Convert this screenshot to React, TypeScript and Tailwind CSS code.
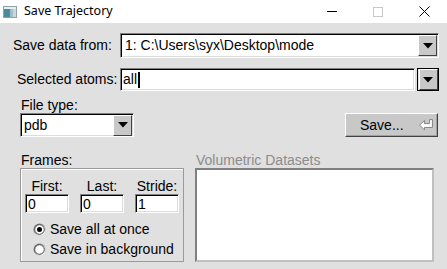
import React from "react";

const sunken =
  "border border-t-[#808080] border-l-[#808080] border-b-white border-r-white shadow-[inset_1px_1px_0_#000,inset_-1px_-1px_0_#dcdcdc]";

function Arrow() {
  return (
    <div className="w-[19px] h-[21px] bg-[#c8c8c8] border border-t-white border-l-white border-b-[#404040] border-r-[#404040] flex items-center justify-center shrink-0">
      <svg width="10" height="6" viewBox="0 0 10 6">
        <polygon points="0,0 10,0 5,5.5" fill="#000" />
      </svg>
    </div>
  );
}

function Radio({ on }: { on?: boolean }) {
  return (
    <svg width="13" height="13" viewBox="0 0 13 13" className="shrink-0">
      <circle cx="6.5" cy="6.5" r="6" fill="#808080" />
      <circle cx="7" cy="7" r="5.5" fill="#fff" />
      <circle cx="6.5" cy="6.5" r="4.8" fill="#fff" stroke="#404040" strokeWidth="1" />
      {on && <circle cx="6.5" cy="6.5" r="2.5" fill="#000" />}
    </svg>
  );
}

function Entry({ v }: { v: string }) {
  return (
    <div className={`w-[44px] h-[19px] bg-white ${sunken} flex items-center pl-[2px] text-[14px] leading-none`}>
      {v}
    </div>
  );
}

export default function App() {
  return (
    <div
      className="w-[447px] h-[269px] bg-[#e0e0e0] flex flex-col overflow-hidden text-black"
      style={{ fontFamily: '"Liberation Sans", Arial, sans-serif' }}
    >
      {/* title bar */}
      <div className="h-[23px] bg-white flex items-center shrink-0">
        <svg width="14" height="12" viewBox="0 0 14 12" className="ml-[3px]">
          <rect x="0" y="0" width="14" height="12" fill="#8fa0a8" />
          <rect x="1" y="1" width="12" height="10" fill="#c8d8dc" />
          <rect x="1" y="3" width="6" height="8" fill="#4a8a9a" />
          <rect x="7" y="3" width="3" height="8" fill="#9cc0c8" />
          <rect x="1" y="1" width="12" height="2" fill="#e8eef0" />
        </svg>
        <span
          className="ml-[7px] text-[12.5px] text-black"
          style={{ fontFamily: '"Noto Sans", "Open Sans", sans-serif' }}
        >
          Save Trajectory
        </span>
        <div className="ml-auto flex items-center h-full">
          <div className="w-[46px] h-full flex items-center justify-center">
            <div className="w-[10px] h-px bg-black" />
          </div>
          <div className="w-[46px] h-full flex items-center justify-center">
            <div className="w-[10px] h-[10px] border border-[#c8c8c8]" />
          </div>
          <div className="w-[46px] h-full flex items-center justify-center">
            <svg width="11" height="11" viewBox="0 0 11 11">
              <path d="M0.5 0.5L10.5 10.5M10.5 0.5L0.5 10.5" stroke="#000" strokeWidth="1" />
            </svg>
          </div>
        </div>
      </div>

      {/* row 1 */}
      <div className="flex items-center mt-[10px] h-[25px]">
        <div className="w-[120px] pl-[13px] text-[14px]">Save data from:</div>
        <div className={`w-[319px] h-[25px] bg-white ${sunken} flex items-center pr-[1px]`}>
          <span className="pl-[4px] text-[14px] flex-1">1: C:\Users\syx\Desktop\mode</span>
          <Arrow />
        </div>
      </div>

      {/* row 2 */}
      <div className="flex items-center mt-[10px] h-[23px]">
        <div className="w-[120px] pl-[17px] text-[14px]">Selected atoms:</div>
        <div className={`w-[295px] h-[23px] bg-white ${sunken} flex items-center`}>
          <span className="pl-[2px] text-[14px]">all</span>
          <span className="w-[2px] h-[16px] bg-black ml-px" />
        </div>
        <div className="ml-[2px] w-[22px] h-[23px] border border-black flex items-center justify-center">
          <Arrow />
        </div>
      </div>

      {/* row 3 */}
      <div className="flex mt-[6px] pl-[20px] pr-[9px]">
        <div className="flex flex-col">
          <div className="text-[14px] leading-[16px] pl-px">File type:</div>
          <div className={`w-[114px] h-[24px] bg-white ${sunken} flex items-center pr-px`}>
            <span className="pl-[3px] text-[14px] flex-1">pdb</span>
            <Arrow />
          </div>
        </div>
        <div className="ml-auto self-end w-[93px] h-[24px] bg-[#c8c8c8] border border-t-white border-l-white border-b-[#404040] border-r-[#404040] shadow-[inset_-1px_-1px_0_#a0a0a0] flex items-center pl-[14px]">
          <span className="text-[14px]">Save...</span>
          <svg width="15" height="12" viewBox="0 0 15 12" className="ml-[15px]">
            <polygon
              points="0.5,6 5.5,1.5 5.5,4.5 10.5,4.5 10.5,0.5 13.5,0.5 13.5,8.5 5.5,8.5 5.5,11 "
              fill="#e6e6e6"
              stroke="#8a8a8a"
              strokeWidth="1"
            />
            <polygon
              points="1.5,6 5,3 5,5.5 11.5,5.5 11.5,1.5 12.5,1.5 12.5,7.5 5,7.5 5,9.5"
              fill="#ffffff"
            />
          </svg>
        </div>
      </div>

      {/* row 4 */}
      <div className="flex mt-[15px] pl-[20px]">
        <div className="flex flex-col">
          <div className="text-[14px] leading-[16px] pl-px">Frames:</div>
          <div className="w-[164px] h-[94px] border border-[#9a9a9a] shadow-[inset_1px_1px_0_#fff] flex flex-col px-[4px] pt-[9px]">
            <div className="flex justify-between">
              {[
                ["First:", "0"],
                ["Last:", "0"],
                ["Stride:", "1"],
              ].map(([l, v]) => (
                <div key={l} className="flex flex-col items-center">
                  <div className="text-[14px] leading-[16px]">{l}</div>
                  <Entry v={v} />
                </div>
              ))}
            </div>
            <div className="flex items-center gap-[4px] mt-[6px] pl-[8px] h-[20px]">
              <Radio on />
              <span className="text-[14px]">Save all at once</span>
            </div>
            <div className="flex items-center gap-[4px] pl-[8px] h-[20px]">
              <Radio />
              <span className="text-[14px]">Save in background</span>
            </div>
          </div>
        </div>
        <div className="flex flex-col ml-[11px]">
          <div className="text-[14px] leading-[16px] text-[#8c8c8c] pl-px">Volumetric Datasets</div>
          <div className="w-[239px] h-[94px] bg-white border-2 border-t-[#808080] border-l-[#808080] border-b-[#c0c0c0] border-r-[#c0c0c0]" />
        </div>
      </div>
    </div>
  );
}
